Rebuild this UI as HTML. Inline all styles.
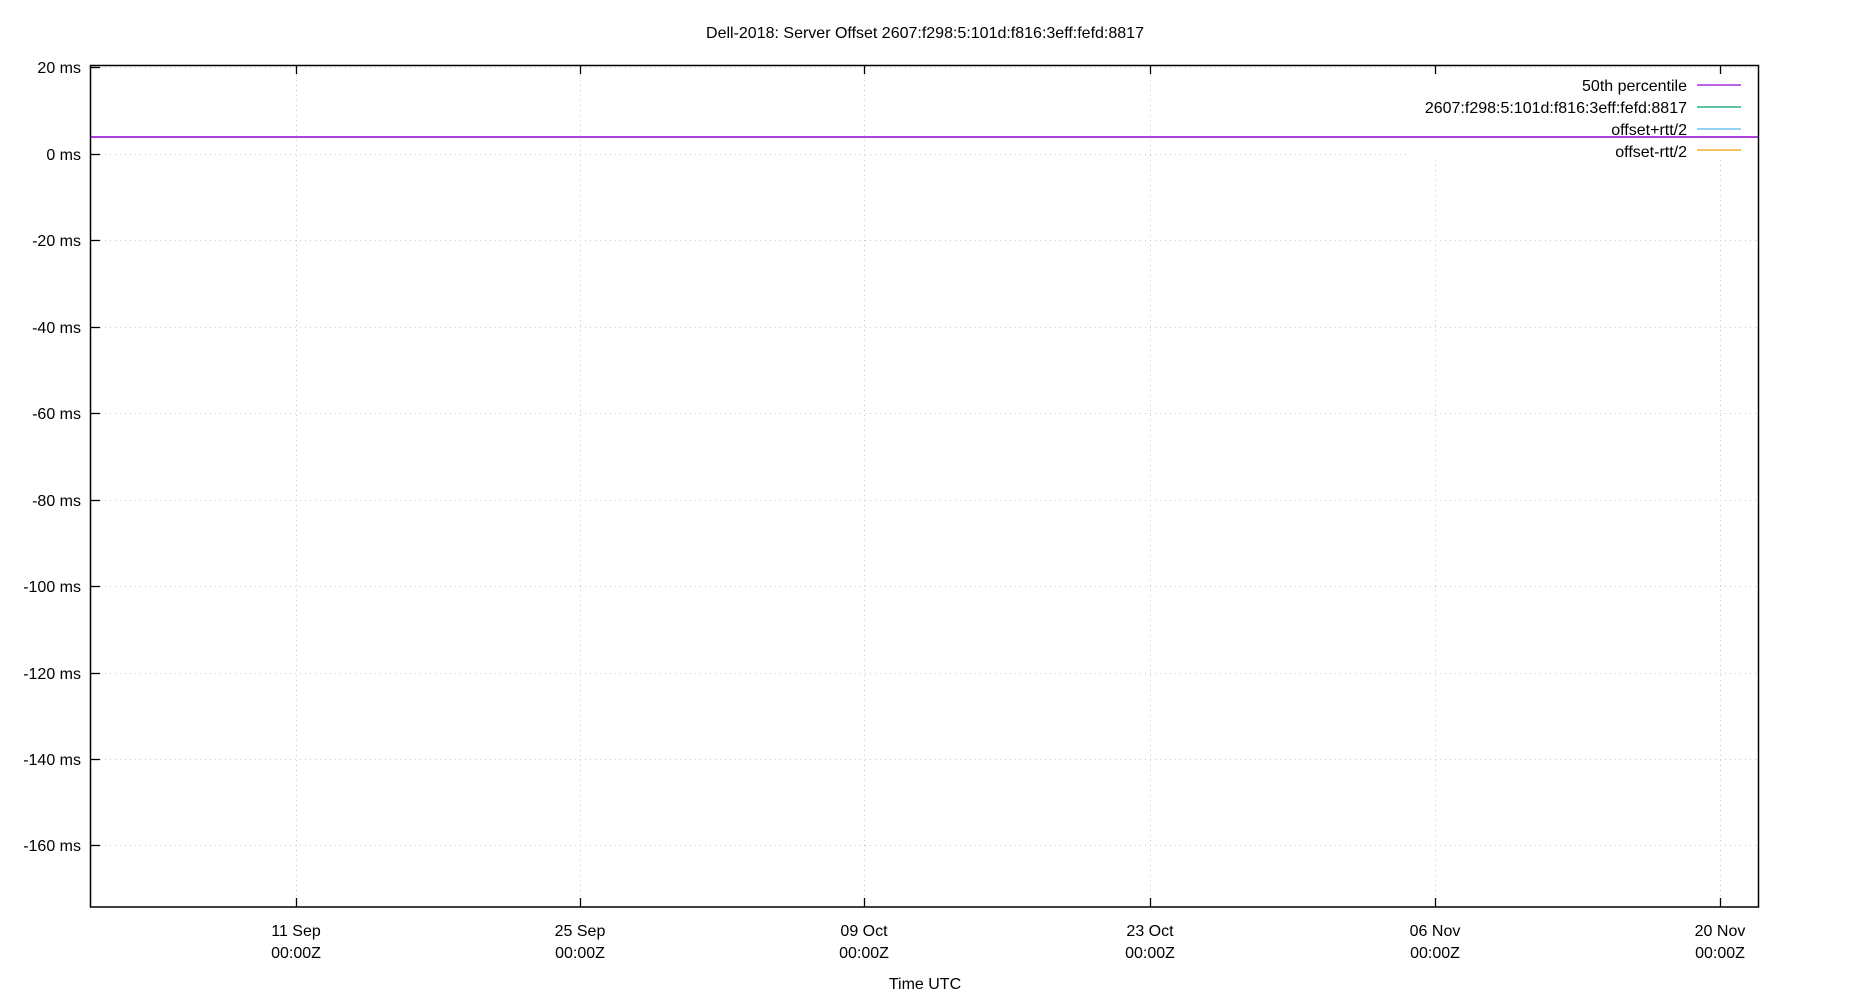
<!DOCTYPE html>
<html><head><meta charset="utf-8"><style>html,body{margin:0;padding:0;background:#fff}svg{display:block}text{font-family:"Liberation Sans","DejaVu Sans",sans-serif;font-size:16px;fill:#000}</style></head><body>
<svg width="1850" height="1000" viewBox="0 0 1850 1000">
<rect width="1850" height="1000" fill="#fff"/>
<g stroke="#c8c8c8" stroke-width="1" stroke-dasharray="1,4">
<line x1="90" y1="67.5" x2="1759" y2="67.5"/>
<line x1="90" y1="154.5" x2="1410" y2="154.5"/>
<line x1="90" y1="240.5" x2="1759" y2="240.5"/>
<line x1="90" y1="327.5" x2="1759" y2="327.5"/>
<line x1="90" y1="413.5" x2="1759" y2="413.5"/>
<line x1="90" y1="500.5" x2="1759" y2="500.5"/>
<line x1="90" y1="586.5" x2="1759" y2="586.5"/>
<line x1="90" y1="673.5" x2="1759" y2="673.5"/>
<line x1="90" y1="759.5" x2="1759" y2="759.5"/>
<line x1="90" y1="845.5" x2="1759" y2="845.5"/>
<line x1="296.5" y1="65" x2="296.5" y2="907"/>
<line x1="580.5" y1="65" x2="580.5" y2="907"/>
<line x1="864.5" y1="65" x2="864.5" y2="907"/>
<line x1="1150.5" y1="65" x2="1150.5" y2="907"/>
<line x1="1435.5" y1="160" x2="1435.5" y2="907"/>
<line x1="1720.5" y1="160" x2="1720.5" y2="907"/>
</g>
<line x1="90" y1="137" x2="1759" y2="137" stroke="#9400d3" stroke-width="1.5"/>
<rect x="90.5" y="65.5" width="1668" height="841.5" fill="none" stroke="#000" stroke-width="1.5"/>
<g stroke="#000" stroke-width="1.3">
<line x1="90" y1="67.5" x2="100" y2="67.5"/><line x1="90" y1="154.5" x2="100" y2="154.5"/><line x1="90" y1="240.5" x2="100" y2="240.5"/><line x1="90" y1="327.5" x2="100" y2="327.5"/><line x1="90" y1="413.5" x2="100" y2="413.5"/><line x1="90" y1="500.5" x2="100" y2="500.5"/><line x1="90" y1="586.5" x2="100" y2="586.5"/><line x1="90" y1="673.5" x2="100" y2="673.5"/><line x1="90" y1="759.5" x2="100" y2="759.5"/><line x1="90" y1="845.5" x2="100" y2="845.5"/>
<line x1="296.5" y1="65" x2="296.5" y2="74"/><line x1="296.5" y1="898" x2="296.5" y2="907"/>
<line x1="580.5" y1="65" x2="580.5" y2="74"/><line x1="580.5" y1="898" x2="580.5" y2="907"/>
<line x1="864.5" y1="65" x2="864.5" y2="74"/><line x1="864.5" y1="898" x2="864.5" y2="907"/>
<line x1="1150.5" y1="65" x2="1150.5" y2="74"/><line x1="1150.5" y1="898" x2="1150.5" y2="907"/>
<line x1="1435.5" y1="65" x2="1435.5" y2="74"/><line x1="1435.5" y1="898" x2="1435.5" y2="907"/>
<line x1="1720.5" y1="65" x2="1720.5" y2="74"/><line x1="1720.5" y1="898" x2="1720.5" y2="907"/>
</g>
<text x="925" y="38" text-anchor="middle">Dell-2018: Server Offset 2607:f298:5:101d:f816:3eff:fefd:8817</text>
<g text-anchor="end">
<text x="81" y="73">20 ms</text><text x="81" y="160">0 ms</text><text x="81" y="246">-20 ms</text><text x="81" y="333">-40 ms</text><text x="81" y="419">-60 ms</text><text x="81" y="506">-80 ms</text><text x="81" y="592">-100 ms</text><text x="81" y="679">-120 ms</text><text x="81" y="765">-140 ms</text><text x="81" y="851">-160 ms</text>
<text x="1687" y="91">50th percentile</text>
<text x="1687" y="113">2607:f298:5:101d:f816:3eff:fefd:8817</text>
<text x="1687" y="135">offset+rtt/2</text>
<text x="1687" y="157">offset-rtt/2</text>
</g>
<line x1="1697" y1="85" x2="1741" y2="85" stroke="#9400d3" stroke-width="1.3"/>
<line x1="1697" y1="107" x2="1741" y2="107" stroke="#009e73" stroke-width="1.3"/>
<line x1="1697" y1="129" x2="1741" y2="129" stroke="#56b4e9" stroke-width="1.3"/>
<line x1="1697" y1="150" x2="1741" y2="150" stroke="#e69f00" stroke-width="1.3"/>
<g text-anchor="middle">
<text x="296" y="936">11 Sep</text><text x="296" y="958">00:00Z</text>
<text x="580" y="936">25 Sep</text><text x="580" y="958">00:00Z</text>
<text x="864" y="936">09 Oct</text><text x="864" y="958">00:00Z</text>
<text x="1150" y="936">23 Oct</text><text x="1150" y="958">00:00Z</text>
<text x="1435" y="936">06 Nov</text><text x="1435" y="958">00:00Z</text>
<text x="1720" y="936">20 Nov</text><text x="1720" y="958">00:00Z</text>
<text x="925" y="989">Time UTC</text>
</g>
</svg>
</body></html>
